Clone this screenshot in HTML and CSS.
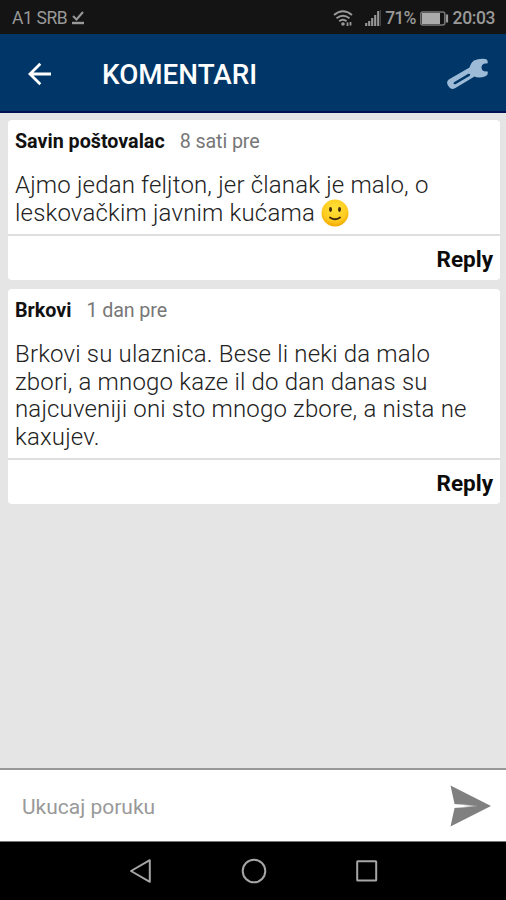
FILE: index.html
```html
<!DOCTYPE html>
<html lang="sr">
<head>
  <meta charset="UTF-8">
  <title>Komentari</title>
  <link rel="stylesheet" href="styles.css">
</head>
<body>
  <div class="status-bar">
    <span class="carrier">A1 SRB</span>
    <svg class="check" width="14" height="16" viewBox="0 0 14 16"><path d="M2 6l3.5 3.5L12 2" fill="none" stroke="#999" stroke-width="2"/><path d="M1 13h12" stroke="#999" stroke-width="2.4"/></svg>
    <svg class="wifi" width="20" height="17" viewBox="0 0 20 17"><path d="M1 5Q10-2.5 19 5M3.5 8.3Q10 3 16.5 8.3M6.2 11.3Q10 8 13.5 11.3" fill="none" stroke="#999" stroke-width="1.9"/><circle cx="10" cy="14" r="1.8" fill="#999"/><path d="M14.5 12.5v3.5M17.5 12v3.5" stroke="#999" stroke-width="1.8"/></svg>
    <svg class="signal" width="16" height="16" viewBox="0 0 16 16"><path d="M1.2 16v-3M4.2 16v-5M7.2 16V8M10.2 16V5M13.2 16V1" stroke="#999" stroke-width="2.1"/><path d="M15.5 16V0" stroke="#444"/></svg>
    <span class="percent">71%</span>
    <svg class="battery" width="29" height="15" viewBox="0 0 29 15"><rect x=".8" y="1" width="24" height="13" rx="2" fill="none" stroke="#777" stroke-width="1.5"/><path d="M2 2h18v11h-18z" fill="#aaa"/><path d="M27 3.5v8" stroke="#999" stroke-width="2.2"/></svg>
    <span class="clock">20:03</span>
  </div>

  <header class="header">
    <svg class="back" width="24" height="24" viewBox="0 0 24 24"><path d="M23 12H2.5M12.3 1.8L2 12l10.3 10.2" fill="none" stroke="#fff" stroke-width="2.8"/></svg>
    <h1 class="title">KOMENTARI</h1>
    <svg class="wrench" width="42" height="32" viewBox="0 0 42 32"><path fill="#9dbbd7" fill-rule="evenodd" d="M1.8 21.5L22.5 9.5Q24 4.5 27 2.5Q32 .2 38.5 1Q41 1.5 40.7 5.3L36.8 5.8Q34.2 7 34.5 9.8Q34.5 12.5 37 13.3L40.7 13.5Q41.3 17 39 18Q32 20.8 27.5 18.5L8 30.2Q4.5 32 2.5 29.5Q-2 24.5 1.8 21.5ZM7 24.2Q5.5 26.5 8.5 26.2L22.5 18Q24.3 15.3 21.3 15.7Z"/></svg>
  </header>

  <main class="comments">
    <article class="comment">
      <div class="meta"><span class="name">Savin poštovalac</span><span class="time">8 sati pre</span></div>
      <p class="text">Ajmo jedan feljton, jer članak je malo, o<br>leskovačkim javnim kućama <svg class="smiley" width="28" height="28" viewBox="0 0 28 28"><defs><radialGradient id="face" cx=".5" cy=".35" r=".65"><stop offset="0" stop-color="#ffe238"/><stop offset=".7" stop-color="#fecb20"/><stop offset="1" stop-color="#f2a600"/></radialGradient></defs><circle cx="14" cy="14" r="13.5" fill="url(#face)"/><ellipse cx="9.5" cy="10.5" rx="1.5" ry="2.4" fill="#422b0d"/><ellipse cx="18.5" cy="10.5" rx="1.5" ry="2.4" fill="#422b0d"/><path d="M9 18.5q5 3.5 10 0" fill="none" stroke="#422b0d" stroke-width="1.8" stroke-linecap="round"/></svg></p>
      <div class="actions"><a class="reply">Reply</a></div>
    </article>

    <article class="comment second">
      <div class="meta"><span class="name">Brkovi</span><span class="time">1 dan pre</span></div>
      <p class="text">Brkovi su ulaznica. Bese li neki da malo<br>zbori, a mnogo kaze il do dan danas su<br>najcuveniji oni sto mnogo zbore, a nista ne<br>kaxujev.</p>
      <div class="actions"><a class="reply">Reply</a></div>
    </article>
  </main>

  <div class="composer">
    <span class="placeholder">Ukucaj poruku</span>
    <svg class="send" width="42" height="42" viewBox="0 0 42 42"><defs><linearGradient id="slit"><stop offset="0" stop-color="#fff"/><stop offset=".4" stop-color="#fff"/><stop offset="1" stop-color="#808080"/></linearGradient></defs><path d="M.5.5L41 21L.5 41.5L5 21Z" fill="#808080"/><path d="M3 19L28 20.5V21.5L3 23Z" fill="url(#slit)"/></svg>
  </div>

  <nav class="nav-bar">
    <svg width="24" height="26" viewBox="0 0 24 26"><path d="M20.8 2.2v21.6L2 13Z" fill="none" stroke="#a6a6a6" stroke-width="2" stroke-linejoin="round"/></svg>
    <svg width="26" height="26" viewBox="0 0 26 26"><circle cx="13" cy="13" r="11.3" fill="none" stroke="#a6a6a6" stroke-width="2"/></svg>
    <svg width="24" height="24" viewBox="0 0 24 24"><rect x="2.2" y="2.2" width="19" height="19.3" rx=".5" fill="none" stroke="#a6a6a6" stroke-width="2"/></svg>
  </nav>
</body>
</html>
```
FILE: styles.css
```css
* {
  box-sizing: border-box;
}

body {
  margin: 0;
  height: 900px;
  display: flex;
  flex-direction: column;
  background: #e5e5e5;
  font-family: Roboto, sans-serif;
  overflow: hidden;
}

svg {
  display: block;
  flex: none;
}

.status-bar {
  height: 34px;
  display: flex;
  align-items: center;
  padding: 2px 11px 0 12px;
  background: #141414;
  color: #999;
  font-size: 17.5px;
  white-space: nowrap;
}

.carrier {
  letter-spacing: -0.4px;
}

.check {
  margin-left: 4px;
}

.wifi {
  margin-left: auto;
}

.signal {
  margin: 0 4px 0 12px;
}

.percent {
  font-weight: 500;
  letter-spacing: -0.8px;
}

.clock {
  font-weight: 500;
  letter-spacing: -0.4px;
}

.battery {
  margin: 0 4px 0 4px;
}

.header {
  height: 79px;
  display: flex;
  align-items: center;
  padding: 0 17px 0 28px;
  background: #003768;
  border-bottom: 2px solid #04104f;
}

.title {
  margin: 0 auto 0 50px;
  color: #fff;
  font-size: 27.8px;
  font-weight: 500;
  line-height: 32px;
  padding-top: 5px;
}

.back {
  margin-top: 2px;
}

.wrench {
  margin-top: 2px;
}

.comments {
  flex: 1;
  display: flex;
  flex-direction: column;
  gap: 9px;
  padding: 7px 6px 0 8px;
}

.comment {
  height: 160px;
  display: flex;
  flex-direction: column;
  background: #fff;
  border-radius: 4px;
}

.second {
  height: 215px;
}

.meta {
  display: flex;
  gap: 15px;
  padding: 10px 7px 0;
  font-size: 19.7px;
  line-height: 24px;
}

.name {
  color: #111;
  font-weight: 700;
}

.time {
  color: #777;
  letter-spacing: -0.1px;
}

.text {
  margin: 18px 0 0;
  padding-left: 7px;
  color: #222;
  font-size: 24px;
  font-weight: 300;
  letter-spacing: 0.17px;
  line-height: 27.7px;
  white-space: nowrap;
}

.smiley {
  display: inline-block;
  margin: -4px 0;
  vertical-align: -2px;
}

.actions {
  height: 46px;
  display: flex;
  justify-content: flex-end;
  align-items: center;
  margin-top: auto;
  padding: 2px 7px 0 0;
  border-top: 2px solid #dedede;
}

.reply {
  color: #0b0b0b;
  font-size: 22.5px;
  font-weight: 700;
}

.composer {
  height: 74px;
  display: flex;
  align-items: center;
  justify-content: space-between;
  padding: 1px 14px 0 22px;
  background: #fff;
  border-top: 2px solid #989898;
  border-bottom: 1px solid #777;
}

.placeholder {
  padding-top: 2px;
  color: #999;
  font-size: 21px;
}

.nav-bar {
  height: 58px;
  display: flex;
  align-items: center;
  justify-content: center;
  gap: 88px;
  padding-left: 1px;
  background: #000;
}
```
